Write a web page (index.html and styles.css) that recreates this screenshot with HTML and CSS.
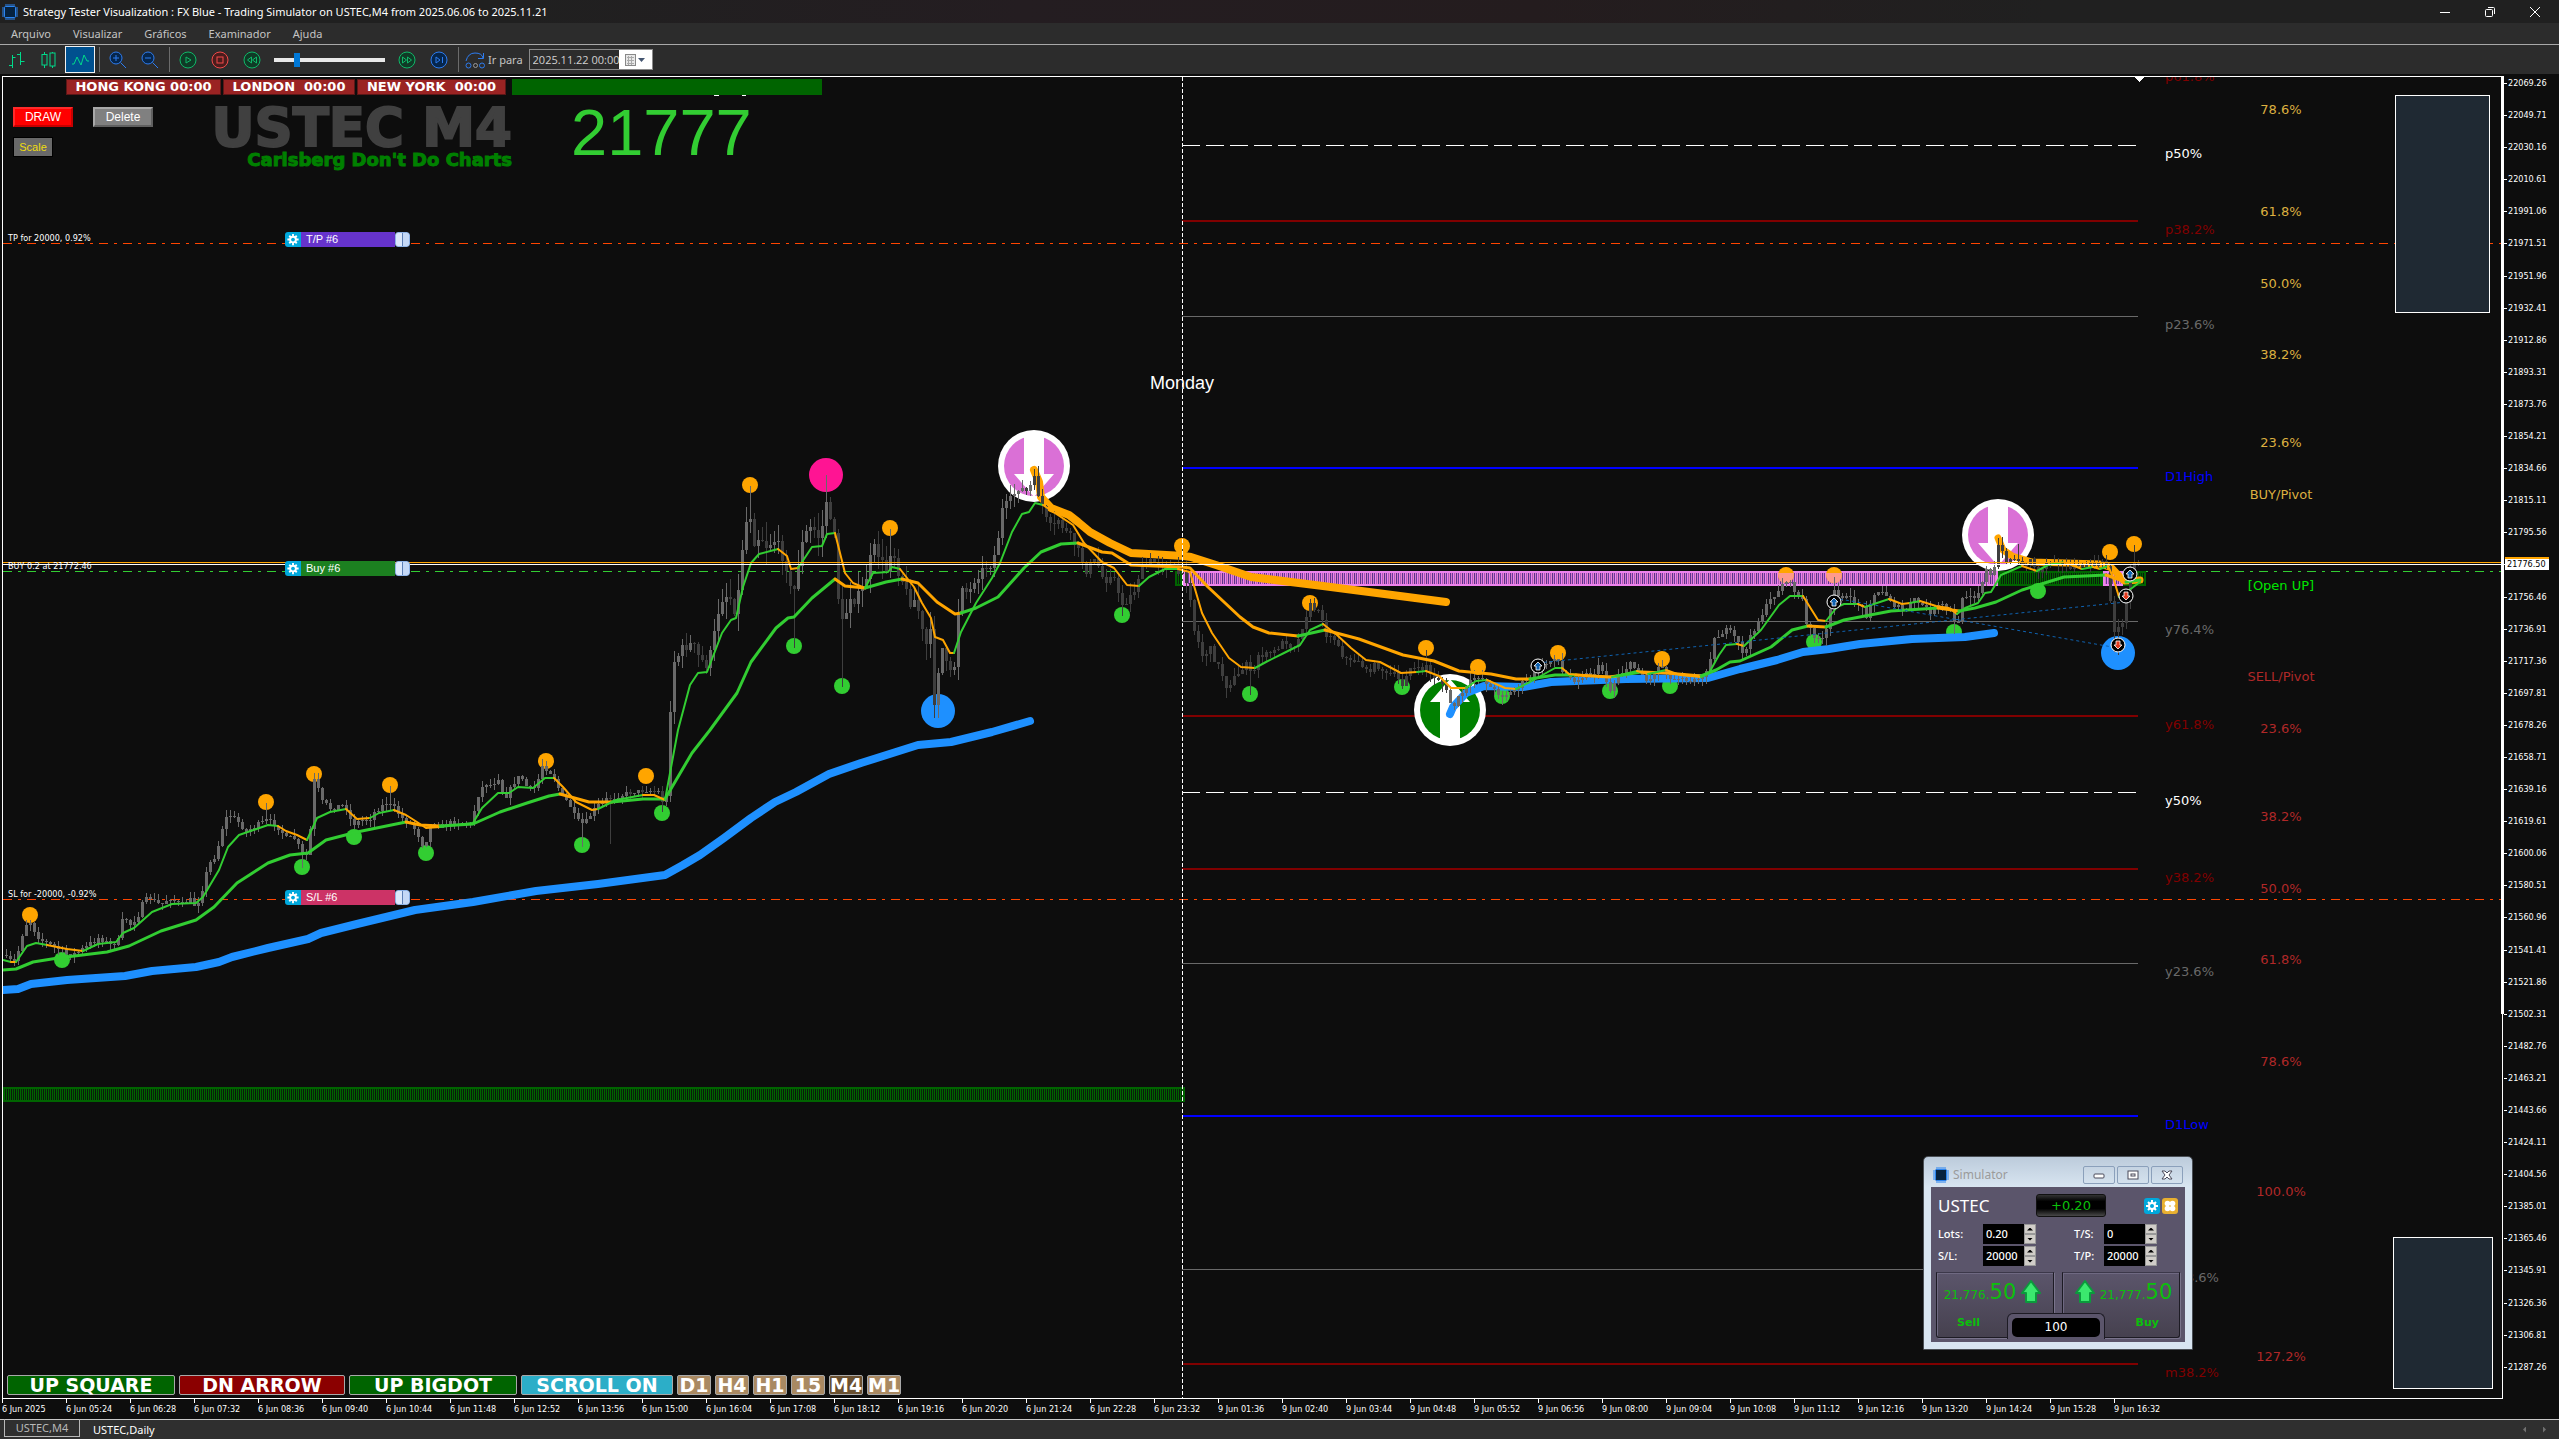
FILE: index.html
```
<!DOCTYPE html>
<html lang="pt">
<head>
<meta charset="utf-8">
<title>Strategy Tester Visualization</title>
<link rel="stylesheet" href="styles.css">
</head>
<body>
<svg class="defs" width="0" height="0" aria-hidden="true">
  <defs>
    <symbol id="chip" viewBox="0 0 16 16">
      <path d="M4 0v16M6 0v16M8 0v16M10 0v16M12 0v16M0 4h16M0 6h16M0 8h16M0 10h16M0 12h16" stroke="#2a84f0" stroke-width="1" fill="none"/>
      <rect x="2.500" y="2.500" width="11" height="11" rx="1" fill="#06223f" stroke="#2a84f0"/>
    </symbol>
    <symbol id="gear" viewBox="0 0 16 16">
      <path d="M8 2v12M2 8h12M4 4l8 8M12 4l-8 8" stroke="#fff" stroke-width="2"/>
      <circle cx="8" cy="8" r="4" fill="#fff"/><circle cx="8" cy="8" r="2" fill="#00a8dc"/>
    </symbol>
    <symbol id="rise" viewBox="0 0 20 24">
      <path d="M10 1L19 13H15V22H5V13H1Z" fill="#3be86e" stroke="#0b9a3c" stroke-width="2" stroke-linejoin="round"/>
    </symbol>
  </defs>
</svg>
<div class="app">
  <header class="titlebar">
    <svg class="app-icon" viewBox="0 0 16 16"><use href="#chip"/></svg>
    <h1 class="app-title">Strategy Tester Visualization : FX Blue - Trading Simulator on USTEC,M4 from 2025.06.06 to 2025.11.21</h1>
    <div class="caption">
      <button class="caption-btn" aria-label="Minimize"><svg viewBox="0 0 12 12"><path d="M1 6.500h10"/></svg></button>
      <button class="caption-btn" aria-label="Restore"><svg viewBox="0 0 12 12"><rect x="1.500" y="3.500" width="7" height="7" rx="1"/><path d="M4 1.500h5.500q1 0 1 1V8"/></svg></button>
      <button class="caption-btn" aria-label="Close"><svg viewBox="0 0 12 12"><path d="M1 1l10 10M11 1L1 11"/></svg></button>
    </div>
  </header>

  <nav class="menubar">
    <button class="menu">Arquivo</button>
    <button class="menu">Visualizar</button>
    <button class="menu">Gráficos</button>
    <button class="menu">Examinador</button>
    <button class="menu">Ajuda</button>
  </nav>

  <div class="toolbar">
    <button class="tool green" aria-label="Bars"><svg viewBox="0 0 20 20"><path d="M6.500 5v13M3 15.500h3.500M6.500 7.500h3M14.500 2v13M11 4.500h3.500M14.500 11.500h4"/></svg></button>
    <button class="tool green" aria-label="Candles"><svg viewBox="0 0 20 20"><path d="M6.500 2v2M6.500 15v3M14.500 2v1M14.500 16v2"/><rect x="4" y="4.500" width="5" height="10.500"/><rect x="12" y="3" width="5" height="13"/></svg></button>
    <button class="tool green active" aria-label="Line"><svg viewBox="0 0 20 20"><path d="M2 14h2l3-7 4 8 3-10 3 6h2"/></svg></button>
    <span class="sep"></span>
    <button class="tool blue" aria-label="Zoom in"><svg viewBox="0 0 20 20"><circle cx="8" cy="8" r="6" class="shade"/><path d="M5 8h6M8 5v6M12.500 12.500L18 18"/></svg></button>
    <button class="tool blue" aria-label="Zoom out"><svg viewBox="0 0 20 20"><circle cx="8" cy="8" r="6" class="shade"/><path d="M5 8h6M12.500 12.500L18 18"/></svg></button>
    <span class="sep"></span>
    <button class="tool play" aria-label="Play"><svg viewBox="0 0 20 20"><circle cx="10" cy="10" r="8" class="shade"/><path d="M8 7l5 3-5 3z"/></svg></button>
    <button class="tool stop" aria-label="Stop"><svg viewBox="0 0 20 20"><circle cx="10" cy="10" r="8" class="shade"/><rect x="7" y="7" width="6" height="6"/></svg></button>
    <button class="tool play" aria-label="Slower"><svg viewBox="0 0 20 20"><circle cx="10" cy="10" r="8" class="shade"/><path d="M9.500 7v6l-4-3zM14.500 7v6l-4-3z"/></svg></button>
    <input class="speed" type="range" min="0" max="32" value="6" aria-label="Speed">
    <button class="tool play" aria-label="Faster"><svg viewBox="0 0 20 20"><circle cx="10" cy="10" r="8" class="shade"/><path d="M5.500 7v6l4-3zM10.500 7v6l4-3z"/></svg></button>
    <button class="tool blue" aria-label="To end"><svg viewBox="0 0 20 20"><circle cx="10" cy="10" r="8" class="shade"/><path d="M7 7v6l4-3zM13.500 7v6"/></svg></button>
    <span class="sep"></span>
    <button class="goto"><svg viewBox="0 0 20 20"><path d="M1 11Q3 3 10 3t8 5M18.500 3v5.500H13"/><circle cx="3.500" cy="15.500" r="2.500"/><circle cx="10.500" cy="15.500" r="2" stroke="#999"/><circle cx="17" cy="15.500" r="2.500"/></svg>Ir para</button>
    <div class="datebox">
      <input class="date" type="text" value="2025.11.22 00:00" aria-label="Date">
      <button class="date-drop" aria-label="Calendar"><svg viewBox="0 0 24 16"><rect x="2.500" y="2.500" width="10" height="11" fill="#e8e8e8" stroke="#888"/><path d="M4 5.500h7M4 8.500h7M4 11.500h7M5.500 4v9M8.500 4v9" stroke="#aaa"/><path d="M15 6h7l-3.500 4z" fill="#445570"/></svg></button>
    </div>
  </div>

  <main class="chart">
    <section class="plot">
      <svg class="canvas" id="canvas" role="img" aria-label="USTEC M4"></svg>
      <div class="edge"></div>

      <div class="sessions">
        <span class="session">HONG KONG 00:00</span>
        <span class="session london">LONDON&nbsp; 00:00</span>
        <span class="session york">NEW YORK&nbsp; 00:00</span>
        <span class="status"></span>
      </div>
      <div class="draw-tools">
        <button class="btn draw">DRAW</button>
        <button class="btn delete">Delete</button>
        <button class="btn scale">Scale</button>
      </div>
      <div class="watermark">
        <div class="symbol">USTEC M4</div>
        <div class="motto">Carlsberg Don't Do Charts</div>
      </div>
      <div class="big-price">21777</div>

      <div class="order order-tp"><svg viewBox="0 0 16 16"><use href="#gear"/></svg><span>T/P #6</span><button aria-label="Drag T/P"></button></div>
      <div class="order order-buy"><svg viewBox="0 0 16 16"><use href="#gear"/></svg><span>Buy #6</span><button aria-label="Drag Buy"></button></div>
      <div class="order order-sl"><svg viewBox="0 0 16 16"><use href="#gear"/></svg><span>S/L #6</span><button aria-label="Drag S/L"></button></div>

      <div class="frames">
        <button class="signal up">UP SQUARE</button>
        <button class="signal down">DN ARROW</button>
        <button class="signal up">UP BIGDOT</button>
        <button class="signal scroll">SCROLL ON</button>
        <button class="frame">D1</button>
        <button class="frame">H4</button>
        <button class="frame">H1</button>
        <button class="frame">15</button>
        <button class="frame current">M4</button>
        <button class="frame">M1</button>
      </div>

      <section class="sim">
        <header class="sim-head">
          <svg class="sim-icon" viewBox="0 0 16 16"><use href="#chip"/></svg>
          <h2 class="sim-title">Simulator</h2>
          <button class="sim-btn" aria-label="Minimize"><svg viewBox="0 0 12 12"><rect x="1" y="5" width="10" height="4" rx="1"/></svg></button>
          <button class="sim-btn" aria-label="Maximize"><svg viewBox="0 0 12 12"><rect x="1" y="2" width="10" height="8"/><rect x="4" y="5" width="4" height="2"/></svg></button>
          <button class="sim-btn" aria-label="Close"><svg viewBox="0 0 12 12"><path d="M1 2h3l2 2 2-2h3L8 6l3 4H8L6 8l-2 2H1l3-4z"/></svg></button>
        </header>
        <div class="sim-body">
          <div class="sim-top">
            <span class="sim-symbol">USTEC</span>
            <output class="sim-pos">+0.20</output>
            <button class="sq cyan" aria-label="Settings"><svg viewBox="0 0 16 16"><use href="#gear"/></svg></button>
            <button class="sq gold" aria-label="Layout"><svg viewBox="0 0 16 16"><circle cx="5.500" cy="5.500" r="2.800"/><circle cx="10.500" cy="5.500" r="2.800"/><circle cx="5.500" cy="10.500" r="2.800"/><circle cx="10.500" cy="10.500" r="2.800"/></svg></button>
          </div>
          <div class="fields">
            <label for="lots">Lots:</label><div class="spin"><input id="lots" value="0.20"><span class="steps"><button aria-label="Lots up"></button><button class="dn" aria-label="Lots down"></button></span></div>
            <label for="ts" class="second">T/S:</label><div class="spin"><input id="ts" value="0"><span class="steps"><button aria-label="T/S up"></button><button class="dn" aria-label="T/S down"></button></span></div>
            <label for="sl">S/L:</label><div class="spin"><input id="sl" value="20000"><span class="steps"><button aria-label="S/L up"></button><button class="dn" aria-label="S/L down"></button></span></div>
            <label for="tp" class="second">T/P:</label><div class="spin"><input id="tp" value="20000"><span class="steps"><button aria-label="T/P up"></button><button class="dn" aria-label="T/P down"></button></span></div>
          </div>
          <div class="deal">
            <button class="side sell"><span class="quote">21,776.<b>50</b><svg viewBox="0 0 20 24"><use href="#rise"/></svg></span><span class="verb">Sell</span></button>
            <button class="side buy"><span class="quote"><svg viewBox="0 0 20 24"><use href="#rise"/></svg>21,777.<b>50</b></span><span class="verb">Buy</span></button>
            <div class="spread"><output>100</output></div>
          </div>
        </div>
      </section>
    </section>
    <aside class="price-axis">
      <ul class="prices" id="prices"></ul>
      <div class="price-now">21776.50</div>
    </aside>
    <ul class="time-axis" id="times"></ul>
  </main>

  <footer class="tabs">
    <button class="tab selected">USTEC,M4</button>
    <button class="tab">USTEC,Daily</button>
    <span class="tab-nav"><button aria-label="Previous"></button><button class="next" aria-label="Next"></button></span>
  </footer>
</div>
<script src="chart.js"></script>
</body>
</html>
```
FILE: styles.css
```
* { box-sizing: border-box; }
html, body { height: 100%; margin: 0; }
body { background: #0d0d0d; color: #fff; font-family: "Noto Sans", "Open Sans", sans-serif; font-size: 11px; overflow: hidden; }
button, input { font: inherit; color: inherit; margin: 0; padding: 0; border: 0; background: none; }
ul { list-style: none; margin: 0; padding: 0; }
.defs { position: absolute; }
.app { display: flex; flex-direction: column; height: 100vh; }

.titlebar { display: flex; align-items: center; height: 23px; background: linear-gradient(90deg, #202020 20%, #241d21 40%, #241c1e 60%, #202020 80%); }
.app-icon { width: 16px; height: 16px; margin: 0 5px 0 2px; }
.app-title { flex: 1; margin: 0; font-size: 11px; font-weight: 400; line-height: 22px; }
.caption { display: flex; padding-right: 2px; }
.caption-btn { display: flex; align-items: center; justify-content: center; width: 45px; height: 22px; }
.caption-btn svg { width: 12px; height: 12px; fill: none; stroke: #fff; }

.menubar { display: flex; gap: 22px; height: 22px; padding-left: 11px; background: #2c2c2c; border-bottom: 1px solid #a9a9a9; color: #c4c4c4; }
.menu { line-height: 20px; }

.toolbar { display: flex; align-items: center; height: 29px; background: #2c2c2c; margin-bottom: 2px; }
.tool { display: flex; align-items: center; justify-content: center; width: 32px; height: 28px; }
.tool svg, .goto svg { width: 20px; height: 20px; fill: none; stroke: currentColor; }
.tool.active { width: 30px; margin: 0 1px; height: 27px; background: #00508f; border: 1px solid #f0f0f0; }
.green { color: #00d98a; }
.blue { color: #2d7cf0; }
.blue .shade { fill: #06264c; }
.play { color: #10b768; }
.play .shade { fill: #0f3a26; }
.stop { color: #f24a4a; }
.stop .shade { fill: #4a1c1c; }
.sep { width: 1px; height: 25px; margin: 0 2px 0 3px; background: #6b6b6b; }
.speed { appearance: none; width: 111px; height: 20px; margin: 0 6px; }
.speed::-webkit-slider-runnable-track { height: 4px; background: #e8e8e8; }
.speed::-webkit-slider-thumb { appearance: none; width: 6px; height: 14px; margin-top: -5px; background: #0078d7; }
.goto { display: flex; align-items: center; gap: 3px; margin-left: 4px; color: #c4c4c4; }
.goto svg { color: #2d7cf0; }
.datebox { display: flex; width: 124px; height: 21px; margin-left: 6px; border: 1px solid #8a8a8a; }
.date { flex: 1; min-width: 0; padding-left: 3px; color: #d0d0d0; font-family: "Open Sans", sans-serif; }
.date-drop { width: 33px; background: #fff; }
.date-drop svg { display: block; width: 24px; height: 16px; margin: 0 auto; }

.chart { flex: 1; min-height: 0; display: grid; grid-template-columns: 1fr 56px; grid-template-rows: 1fr 20px; margin-left: 2px; }
.plot { position: relative; border: 1px solid #fff; min-height: 0; }
.canvas { position: absolute; inset: 0; width: 100%; height: 100%; overflow: hidden; }
.canvas text { white-space: pre; }
.edge { position: absolute; top: -1px; right: -2px; width: 3px; height: 71%; background: #fff; }
.level-label, .fib-label { font-family: "DejaVu Sans", sans-serif; font-size: 13px; }
.fib-label { text-anchor: middle; }
.note { font-family: "DejaVu Sans Condensed", "DejaVu Sans", sans-serif; font-size: 9px; fill: #fff; }
.day { font-family: "Liberation Sans", sans-serif; font-size: 18px; fill: #fff; text-anchor: middle; }

.sessions { position: absolute; left: 63px; top: 2px; display: flex; gap: 2px; height: 16px; }
.session { width: 155px; background: #9a2323; border: 1px solid #5c1717; font: 700 13px/14px "DejaVu Sans", sans-serif; text-align: center; white-space: nowrap; }
.london { width: 132px; }
.york { width: 149px; }
.status { width: 310px; margin-left: 4px; background: #006400; }
.draw-tools { position: absolute; left: 10px; top: 30px; display: grid; grid-template-columns: 60px 60px; gap: 10px 20px; font-family: "Liberation Sans", sans-serif; font-size: 12px; }
.btn { height: 20px; border: 2px solid; }
.draw { background: #f00; border-color: #ff2a2a #c80000 #c80000 #ff2a2a; }
.delete { background: #808080; border-color: #a8a8a8 #606060 #606060 #a8a8a8; }
.scale { width: 40px; background: #696969; border: 1px solid #000; color: #f0dc10; font-size: 11px; }
.watermark { position: absolute; left: 160px; top: 27px; width: 349px; text-align: right; font-family: "DejaVu Sans", sans-serif; font-weight: 700; white-space: nowrap; }
.symbol { font-size: 53px; line-height: 48px; color: #404040; -webkit-text-stroke: 2px #404040; }
.motto { font-size: 18px; line-height: 16px; color: #008000; -webkit-text-stroke: 1px #008000; }
.big-price { position: absolute; left: 568px; top: 24px; font: 65px/64px "Liberation Sans", sans-serif; color: #32cd32; }

.order { position: absolute; left: 282px; display: flex; width: 125px; height: 15px; font: 11px/15px "Liberation Sans", sans-serif; border-radius: 3px; overflow: hidden; }
.order svg { width: 16px; height: 15px; background: #00a8dc; }
.order span { flex: 1; padding-left: 5px; }
.order button { width: 15px; border: 1px solid #8fb4e8; background: linear-gradient(90deg, #dbe8fb 45%, #5c7fb5 45%, #5c7fb5 55%, #c4d8f6 55%); border-radius: 3px; }
.order-tp { top: 155px; } .order-tp span { background: #6633cc; }
.order-buy { top: 484px; } .order-buy span { background: #1c8020; }
.order-sl { top: 813px; } .order-sl span { background: #cc3366; }

.frames { position: absolute; left: 4px; bottom: 3px; display: flex; gap: 4px; font: 700 19px/18px "DejaVu Sans", sans-serif; }
.frames button { height: 20px; border: 1px solid #a8a8a8; border-radius: 2px; }
.frames .signal { width: 168px; }
.frames .down { width: 166px; background: #8b0000; }
.frames .scroll { width: 152px; background: #2caec8; }
.up { background: #006400; }
.frame { width: 34px; background: #a98962; }
.current { background: #6a5030; }

.sim { position: absolute; left: 1920px; top: 1079px; width: 270px; padding: 0 7px 7px; background: linear-gradient(#bccbdb, #d8e5f1 30px); border: 1px solid #4a4f55; border-radius: 5px 5px 0 0; }
.sim-head { display: flex; align-items: center; gap: 2px; height: 30px; padding: 5px 2px 0; }
.sim-icon { width: 16px; height: 16px; }
.sim-title { flex: 1; margin: 0 0 0 2px; font-size: 12px; font-weight: 400; color: #9b9b9b; }
.sim-btn { display: flex; align-items: center; justify-content: center; width: 32px; height: 18px; border: 1px solid #8ba0bb; border-radius: 2px; }
.sim-btn svg { width: 12px; height: 12px; fill: #fff; stroke: #4a4a5a; }
.sim-body { background: #5b556b; padding: 7px 5px 4px; }
.sim-top { display: flex; align-items: center; gap: 2px; height: 23px; padding: 0 2px; }
.sim-symbol { width: 96px; font-size: 17px; line-height: 22px; }
.sim-pos { width: 70px; height: 23px; margin-right: auto; background: linear-gradient(#333, #000 30%, #000 65%, #484848); border: 1px solid #111; border-radius: 3px; color: #0bc00b; font: 13px/21px "DejaVu Sans", sans-serif; text-align: center; }
.sq { width: 16px; height: 16px; border-radius: 3px; }
.sq svg { display: block; width: 16px; height: 16px; fill: #fff; }
.cyan { background: #00a8dc; }
.gold { background: #e8b030; }
.fields { display: grid; grid-template-columns: 45px 76px 45px 53px; row-gap: 2px; margin-top: 7px; padding-left: 2px; font-size: 11px; font-weight: 500; line-height: 20px; }
.second { padding-left: 15px; }
.spin { display: flex; width: 53px; height: 20px; }
.spin input { width: 41px; padding-left: 3px; background: #000; }
.steps { display: flex; flex-direction: column; width: 12px; }
.steps button { flex: 1; border: 1px solid #999; background: #d0cdc8; }
.steps button::after { content: ""; display: block; width: 6px; height: 3px; margin: 0 auto; background: #000; clip-path: polygon(50% 0, 100% 100%, 0 100%); }
.steps .dn::after { clip-path: polygon(0 0, 100% 0, 50% 100%); }
.deal { position: relative; display: grid; grid-template-columns: 1fr 1fr; gap: 8px; margin-top: 6px; }
.side { height: 66px; border: 1px solid #1d1b24; border-top-color: #3c384a; background: linear-gradient(#5b556b, #46414f); box-shadow: 1px 1px 0 #7a748c, inset 1px 1px 0 #6f6982; color: #0bc00b; border-radius: 0 0 3px 3px; font-family: "DejaVu Sans", sans-serif; }
.quote { display: flex; align-items: baseline; justify-content: center; height: 36px; font-size: 12px; line-height: 36px; }
.quote b { font-size: 21px; font-weight: 400; }
.quote svg { align-self: center; width: 20px; height: 24px; margin: 0 5px; }
.verb { display: block; padding: 0 20px; font-size: 11px; font-weight: 700; line-height: 26px; text-align: left; }
.buy .verb { text-align: right; }
.spread { position: absolute; left: 50%; bottom: -1px; width: 98px; height: 26px; margin-left: -51px; padding: 4px 4px 2px; background: #5b556b; border: 1px solid #1d1b24; border-bottom: 0; border-radius: 6px 6px 0 0; }
.spread output { display: block; height: 19px; background: #000; border-radius: 5px; font: 12px/19px "DejaVu Sans", sans-serif; text-align: center; }

.price-axis { position: relative; padding: 1px 0 25px 1px; font: 9px/13px "DejaVu Sans Condensed", "DejaVu Sans", sans-serif; }
.prices { display: flex; flex-direction: column; justify-content: space-between; height: 100%; }
.prices li { display: flex; align-items: center; gap: 1px; height: 13px; }
.prices li::before { content: ""; width: 3px; height: 1px; background: #fff; }
.price-now { position: absolute; left: 2px; top: 481px; width: 44px; height: 13px; padding-left: 2px; line-height: 11px; background: #fff; border-top: 2px solid #ffa500; color: #000; }
.time-axis { grid-column: 1 / -1; display: flex; font: 9px/20px "DejaVu Sans Condensed", "DejaVu Sans", sans-serif; white-space: nowrap; overflow: hidden; }
.time-axis li { flex: 0 0 64px; background: linear-gradient(#fff, #fff) 0 0 / 1px 4px no-repeat; }

.tabs { display: flex; height: 20px; background: #2f2f2f; border-top: 1px solid #c8c8c8; padding-left: 4px; }
.tab { padding: 0 13px; line-height: 18px; }
.tab.selected { width: 76px; height: 18px; padding: 0; margin-top: -1px; border: 1px solid #b8b8b8; border-top: 0; color: #b8b8b8; }
.tab-nav { display: flex; gap: 17px; align-items: center; margin-left: auto; padding-right: 13px; }
.tab-nav button { width: 3px; height: 6px; background: #707070; clip-path: polygon(100% 0, 100% 100%, 0 50%); }
.tab-nav .next { clip-path: polygon(0 0, 100% 50%, 0 100%); }
```
FILE: chart.js
```
const NS = "http://www.w3.org/2000/svg";
const canvas = document.getElementById("canvas");

const GREEN = "#32cd32", ORANGE = "#ffa500", BLUE = "#1e90ff", RED = "#800000", GREY = "#696969";

function add(parent, name, attrs, text) {
  const node = document.createElementNS(NS, name);
  for (const key in attrs) node.setAttribute(key, attrs[key]);
  if (text !== undefined) node.textContent = text;
  parent.appendChild(node);
  return node;
}

/* window coordinates: the plot's inner corner is at 3,77 */
const defs = add(canvas, "defs", {});
function stripes(id, base, tones) {
  const p = add(defs, "pattern", { id, width: tones.length, height: 20, patternUnits: "userSpaceOnUse" });
  add(p, "rect", { width: tones.length, height: 20, fill: base });
  tones.forEach((t, i) => t && add(p, "rect", { x: i, width: 1, height: 20, fill: t }));
}
stripes("greenBars", "#006400", [null, "#08270a", null, "#0a1a0a"]);
stripes("violetBars", "#ee82ee", ["#6a3a9a", "#ee82ee", "#b05ab8", "#e884d0", "#5a3090", "#d878c8"]);

const root = add(canvas, "g", { transform: "translate(-3 -77)" });
const crisp = add(root, "g", { "shape-rendering": "crispEdges" });

function hline(y, x1, x2, color, width, dash) {
  add(crisp, "line", { x1, x2, y1: y, y2: y, stroke: color, "stroke-width": width, ...(dash ? { "stroke-dasharray": dash } : {}) });
}

/* daily levels */
const levels = [
  ["p61.8%", 68, RED, 2], ["p50%", 145, "#ffffff", 1, "18 6"], ["p38.2%", 221, RED, 2], ["p23.6%", 316, GREY, 1],
  ["D1High", 468, "#0000ff", 2], ["y76.4%", 621, GREY, 1], ["y61.8%", 716, RED, 2], ["y50%", 792, "#ffffff", 1, "18 6"],
  ["y38.2%", 869, RED, 2], ["y23.6%", 963, GREY, 1], ["D1Low", 1116, "#0000ff", 2], ["m23.6%", 1269, GREY, 1], ["m38.2%", 1364, RED, 2]
];
for (const [label, y, color, width, dash] of levels) {
  hline(width === 1 ? y + 0.5 : y, 1182, 2138, color, width, dash);
  add(root, "text", { x: 2165, y: y + 13, fill: color, class: "level-label" }, label);
}

/* pivot column */
const pivots = [
  ["78.6%", 114, 0], ["61.8%", 216, 0], ["50.0%", 288, 0], ["38.2%", 359, 0], ["23.6%", 447, 0], ["BUY/Pivot", 499, 0],
  ["[Open UP]", 590, 1], ["SELL/Pivot", 681, 2], ["23.6%", 733, 2], ["38.2%", 821, 2], ["50.0%", 893, 2],
  ["61.8%", 964, 2], ["78.6%", 1066, 2], ["100.0%", 1196, 2], ["127.2%", 1361, 2]
];
for (const [label, y, kind] of pivots)
  add(root, "text", { x: 2281, y, fill: ["#dcb040", "#00e600", "#b02828"][kind], class: "fib-label" }, label);

/* order lines and current price */
hline(243.5, 3, 2502, "#ff4500", 1, "9 6 3 6");
hline(899.5, 3, 2502, "#ff4500", 1, "9 6 3 6");
hline(571.5, 3, 2502, GREEN, 1, "9 6 3 6");

function band(parent, x1, x2, y, stroke, fill) {
  add(parent, "rect", { x: x1 + 1, y: y + 1, width: x2 - x1 - 2, height: 13, fill: `url(#${fill})`, stroke, "stroke-width": 2 });
}
band(crisp, 2, 1185, 1087, "#006400", "greenBars");
band(crisp, 1175, 1183, 571, "#006400", "greenBars");
band(crisp, 1183, 1998, 571, "#ee82ee", "violetBars");
band(crisp, 1998, 2103, 571, "#006400", "greenBars");
band(crisp, 2103, 2123, 571, "#ee82ee", "violetBars");
band(crisp, 2123, 2146, 571, "#006400", "greenBars");

/* swing markers */
const dot = (x, y, r, fill) => add(root, "circle", { cx: x, cy: y, r, fill });
[[30,915],[266,802],[314,774],[390,785],[546,761],[646,776],[750,485],[890,528],[1182,546],[1310,603],[1426,648],[1478,667],
 [1558,653],[1662,659],[1786,575],[1834,575],[2110,552],[2134,544]].forEach(([x, y]) => dot(x, y, 8, ORANGE));
[[62,960],[302,867],[354,837],[426,853],[582,845],[662,813],[794,646],[842,686],[1122,615],[1250,694],[1402,687],[1502,696],
 [1610,691],[1670,686],[1814,642],[1954,632],[2038,591]].forEach(([x, y]) => dot(x, y, 8, GREEN));
dot(826, 475, 17, "#ff1493");
dot(938, 711, 17, BLUE);
dot(2118, 653, 17, BLUE);
/* the band tints the two markers that it crosses */
for (const x of [1786, 1834])
  add(root, "path", { d: `M${x - 8} 573Q${x - 8} 583 ${x} 583T${x + 8} 573Z`, fill: "#ff9a8c" });

function bigArrow(x, y, fill, up) {
  const g = add(root, "g", { transform: `translate(${x} ${y})${up ? " rotate(180)" : ""}` });
  add(g, "circle", { r: 36, fill: "#fff" });
  add(g, "circle", { r: 30, fill });
  add(g, "path", { d: "M-10 -32H10V8H20L0 31L-20 8H-10Z", fill: "#fff" });
}
bigArrow(1034, 466, "#da70d6");
bigArrow(1998, 535, "#da70d6");
bigArrow(1450, 710, "#008000", true);

function line(points, color, width) {
  add(root, "polyline", { points: points.join(" "), fill: "none", stroke: color, "stroke-width": width, "stroke-linejoin": "round", "stroke-linecap": "round" });
}

/* long average */
line([3,990,18,989,31,984,67,980,125,976,152,971,196,967,219,962,232,957,268,948,308,939,321,933,357,924,415,910,473,902,536,891,598,884,
  665,875,683,865,700,855,724,838,751,818,775,802,796,792,829,774,861,763,918,745,951,742,992,732,1030,721], BLUE, 8);
line([1450,714,1453,707,1466,693,1484,686,1523,687,1551,682,1626,679,1708,678,1740,669,1777,660,1803,652,1829,649,1860,644,1912,639,
  1965,637,1994,633], BLUE, 8);
line([1034,470,1039,482,1041,497,1051,508,1069,515,1078,522,1090,532,1110,543,1131,553,1184,556,1191,557,1216,565,1251,577,1323,586,1446,602], ORANGE, 8);
line([1998,538,2003,550,2012,556,2032,562,2100,564,2112,568,2124,581,2140,580], ORANGE, 7);

/* price path: x, y of the close */
const path = [3,955,8,960,16,962,20,940,24,928,28,920,32,925,36,935,44,942,62,950,68,956,80,951,98,938,110,945,119,940,123,915,130,925,134,920,
  140,912,143,900,150,898,160,905,170,898,180,905,190,900,196,908,203,885,208,865,216,855,220,835,224,820,230,815,238,822,246,832,256,825,
  266,820,276,825,286,838,294,838,300,850,304,860,308,850,311,820,314,780,318,790,322,802,330,808,345,805,352,825,360,820,370,818,376,810,
  386,803,394,808,402,818,412,825,418,835,424,848,430,825,440,826,450,823,460,822,470,825,478,795,484,783,492,785,498,778,504,800,512,785,
  520,775,528,790,536,788,541,765,548,770,556,780,560,795,568,802,576,820,584,825,590,815,598,805,604,800,612,798,620,795,632,792,645,790,
  658,792,664,805,668,790,671,665,680,652,686,645,692,645,700,660,708,665,714,635,720,598,726,595,732,600,736,615,740,570,744,525,750,515,
  754,540,760,535,766,545,774,540,782,555,788,570,792,610,796,570,800,555,804,535,812,527,820,540,826,500,830,525,836,530,839,630,844,620,
  850,595,856,600,862,590,868,570,872,550,876,548,882,565,888,572,891,540,896,565,902,580,908,600,914,600,920,615,924,650,930,635,934,700,
  939,660,943,645,948,680,954,665,958,610,962,585,968,595,974,580,982,570,990,565,996,550,1002,510,1010,500,1018,487,1026,492,1034,480,
  1040,500,1046,520,1052,530,1058,520,1064,530,1072,540,1080,555,1086,570,1096,560,1104,582,1112,570,1120,605,1128,600,1134,590,1140,570,
  1148,562,1160,563,1170,565,1180,575,1188,580,1194,630,1202,655,1210,650,1220,670,1226,685,1232,680,1240,675,1246,660,1252,680,1258,655,
  1266,655,1276,650,1284,640,1292,648,1298,640,1304,620,1310,605,1316,610,1322,618,1326,635,1336,640,1342,655,1350,662,1358,660,1366,672,
  1376,664,1386,675,1394,675,1402,685,1408,668,1420,670,1426,665,1430,675,1440,680,1446,692,1452,708,1460,695,1468,685,1476,675,1484,680,
  1492,690,1502,695,1512,692,1522,683,1530,678,1538,670,1548,662,1556,655,1562,672,1572,680,1584,675,1594,672,1600,665,1604,675,1610,690,
  1618,675,1630,665,1640,672,1648,683,1656,668,1664,665,1670,680,1680,676,1690,680,1700,680,1708,665,1714,640,1722,632,1728,630,1736,640,
  1744,655,1752,632,1760,617,1770,600,1778,590,1786,580,1794,590,1802,600,1806,625,1814,635,1822,640,1828,625,1833,590,1840,595,1850,600,
  1860,605,1866,615,1872,595,1884,592,1894,605,1904,612,1914,600,1922,605,1930,612,1940,605,1950,610,1956,630,1962,600,1968,592,1976,598,
  1982,580,1986,570,1992,580,1998,545,2006,560,2014,558,2020,565,2030,560,2038,572,2048,560,2060,563,2072,568,2086,565,2100,563,2106,565,
  2110,600,2114,630,2122,625,2126,600,2130,570,2136,560];
let seed = 7;
const rnd = () => (seed = (seed * 16807) % 2147483647) / 2147483647;
function priceAt(x) {
  let i = 0;
  while (i < path.length - 4 && path[i + 2] < x) i += 2;
  const t = Math.min(1, (x - path[i]) / (path[i + 2] - path[i]));
  return path[i + 1] + (path[i + 3] - path[i + 1]) * Math.max(0, t);
}
/* wicks that reach a marker */
const spikes = { 750: 486, 826: 475, 890: 529, 794: 648, 842: 687, 938: 712, 1034: 469, 1182: 548, 1122: 616, 1250: 695, 582: 847, 610: 844,
  302: 868, 390: 786, 266: 803, 1310: 604, 1426: 650, 1998: 538, 2134: 545, 2118: 655, 2114: 652, 662: 812, 2018: 544, 1954: 634, 1834: 577 };
const candles = add(root, "g", { "shape-rendering": "crispEdges" });
let openY = 955;
for (let x = 6; x <= 2138; x += 4) {
  const vol = x < 670 ? 7 : x < 960 ? 19 : x < 1240 ? 12 : 8;
  const closeY = Math.round(priceAt(x) + (rnd() - 0.5) * vol * 0.7);
  let high = Math.round(Math.min(openY, closeY) - rnd() * vol), low = Math.round(Math.max(openY, closeY) + rnd() * vol);
  if (spikes[x]) { high = Math.min(high, spikes[x]); low = Math.max(low, spikes[x]); }
  const falling = closeY > openY;
  const dark = (x >= 1034 && x < 1450) || x >= 1998 || (x > 592 && x < 1034 && falling);
  const fill = dark ? "#3e3e3e" : GREY;
  add(candles, "rect", { x, y: high, width: 1, height: low - high, fill });
  add(candles, "rect", { x: x - 1, y: Math.min(openY, closeY), width: 3, height: Math.max(1, Math.abs(closeY - openY)), fill });
  openY = closeY;
}

/* averages: runs alternate between rising (G) and falling (O) */
function average(runs, width) {
  let last = [];
  for (const [kind, pts] of runs) {
    line([...last, ...pts], kind === "G" ? GREEN : ORANGE, width);
    last = pts.slice(-2);
  }
}
average([
  ["G", [3,970,16,969,33,962,58,958,107,952,129,946,161,931,196,920,214,907,237,883,268,863,290,855,308,853,326,840,357,832,406,822]],
  ["O", [420,825,440,826]], ["G", [473,824,500,812,527,803,549,796,560,794]], ["O", [589,802,612,802]],
  ["G", [643,799,665,799,692,753,710,730,737,693,751,662,776,628,788,618,794,617,812,598,835,579]], ["O", [845,586,865,588]],
  ["G", [886,582,902,579]], ["O", [918,583,937,602,955,614,961,613]], ["G", [976,608,998,597,1024,568,1041,552,1061,544,1078,543]],
  ["O", [1102,552,1112,553,1131,565,1155,566,1182,567,1190,568,1208,587,1240,617,1253,627,1269,633,1298,636]], ["G", [1325,630]],
  ["O", [1359,639,1403,655,1434,661,1459,671,1491,674,1516,679,1530,679]], ["G", [1555,675,1576,675]], ["O", [1609,677,1617,676]],
  ["G", [1641,672]], ["O", [1667,673,1701,676]], ["G", [1716,670,1730,662,1740,661,1771,647,1792,630,1808,626]], ["O", [1826,627]],
  ["G", [1844,620,1891,611,1938,608]], ["O", [1959,611]], ["G", [1975,608,1996,602,2022,590,2064,577,2106,575]], ["O", [2126,582]], ["G", [2140,580]]
], 3);
average([
  ["G", [3,960,11,962]], ["O", [16,962]], ["G", [27,946,36,943,47,945]], ["O", [67,949,83,951]],
  ["G", [98,944,116,942,123,933,134,928,152,912,172,904,196,903,203,897,219,870,228,847,239,835,268,825,278,826]],
  ["O", [286,831,297,835,307,840]], ["G", [317,818,330,812,346,809]], ["O", [357,819,370,818]], ["G", [379,813,394,810]],
  ["O", [406,815,417,822,426,828,440,827]], ["G", [473,823,482,808,498,793,509,793,518,787,533,788,545,778,554,778]],
  ["O", [563,787,576,802,592,810,598,809]], ["G", [616,800,643,795]], ["O", [654,795,665,800]],
  ["G", [678,730,690,685,698,673,707,672,722,633,731,620,736,618,743,587,751,563,759,554,778,549]], ["O", [787,556,791,569,798,568]],
  ["G", [812,547,822,546,827,534,835,533]], ["O", [841,557,845,573,853,583,865,588]], ["G", [873,573,888,572,892,567,900,569]],
  ["O", [914,587,922,603,931,618,935,637,943,640,950,653,954,653]],
  ["G", [961,632,976,603,992,578,1000,563,1012,532,1022,514,1029,512,1035,503,1043,505]],
  ["O", [1073,525,1084,543,1102,562,1114,568,1127,585,1139,586]], ["G", [1149,577,1165,569,1178,569]],
  ["O", [1190,572,1202,613,1212,633,1229,658,1241,667,1255,668]], ["G", [1266,662,1284,653,1300,645,1310,630,1323,624]],
  ["O", [1337,635,1351,648,1366,660,1380,662,1401,673,1417,672]], ["G", [1426,671]], ["O", [1439,676,1451,688,1466,688]],
  ["G", [1476,681,1487,680]], ["O", [1505,688,1516,689]], ["G", [1530,682,1555,668,1562,668]], ["O", [1569,674,1594,676,1612,677]],
  ["G", [1637,671]], ["O", [1648,674]], ["G", [1666,670]], ["O", [1680,675,1701,677]], ["G", [1709,673,1719,655,1726,645,1737,644]],
  ["O", [1744,646]], ["G", [1761,630,1779,605,1790,596,1803,596]], ["O", [1818,620,1826,621]], ["G", [1837,607,1844,604,1858,604]],
  ["O", [1865,607]], ["G", [1889,599]], ["O", [1902,604,1910,603]], ["G", [1920,601]], ["O", [1936,606,1949,608,1957,614]],
  ["G", [1965,608,1978,603,1985,593,1991,592,2001,575,2022,566]], ["O", [2037,571]], ["G", [2048,565,2064,562]], ["O", [2082,569]],
  ["G", [2093,567]], ["O", [2100,569]], ["G", [2108,566]], ["O", [2113,577,2119,597]], ["G", [2132,588,2140,582]]
], 2);

/* current price, day separator */
const front = add(root, "g", { "shape-rendering": "crispEdges" });
add(front, "rect", { x: 3, y: 562, width: 2500, height: 1, fill: ORANGE });
add(front, "rect", { x: 3, y: 564, width: 2500, height: 1, fill: "#fff" });
add(front, "line", { x1: 1182.5, x2: 1182.5, y1: 77, y2: 1398, stroke: "#fff", "stroke-dasharray": "4 2" });
add(front, "path", { d: "M2134 77H2144L2139 82Z", fill: "#fff" });
add(front, "path", { d: "M714 95.500h5M742 95.500h4", stroke: "#fff" });

/* trades */
for (const [x1, y1, x2, y2] of [[1538, 663, 2126, 602], [1834, 598, 2118, 648]])
  add(root, "line", { x1, y1, x2, y2, stroke: "#0f62b0", "stroke-dasharray": "3 3" });
for (const [x, y, buy] of [[1538, 666, 1], [1834, 602, 1], [2130, 574, 1], [2126, 596, 0], [2118, 645, 0]]) {
  const g = add(root, "g", { transform: `translate(${x} ${y})` });
  add(g, "circle", { r: 7, fill: "#000", stroke: "#fff" });
  add(g, "path", { d: "M0 -4L4 0H2V4H-2V0H-4Z", fill: buy ? "#0f62b0" : "#e03a1e", stroke: "#fff", "stroke-width": 0.8, transform: buy ? "" : "rotate(180)" });
}

/* side panels */
add(crisp, "rect", { x: 2395.5, y: 95.5, width: 94, height: 217, fill: "#1f2933", stroke: "#fff" });
add(crisp, "rect", { x: 2393.5, y: 1237.5, width: 99, height: 151, fill: "#1f2933", stroke: "#fff" });

add(root, "text", { x: 8, y: 241, class: "note" }, "TP for 20000, 0.92%");
add(root, "text", { x: 8, y: 569, class: "note" }, "BUY 0.2 at 21772.46");
add(root, "text", { x: 8, y: 897, class: "note" }, "SL for -20000, -0.92%");
add(root, "text", { x: 1182, y: 389, class: "day" }, "Monday");

/* axes */
const prices = document.getElementById("prices");
for (let i = 0; i <= 40; i++) {
  const li = document.createElement("li");
  li.textContent = (22069.26 - 19.55 * i).toFixed(2);
  prices.appendChild(li);
}
function stamp(day, minutes) {
  return `${day} ${String(Math.floor(minutes / 60)).padStart(2, "0")}:${String(minutes % 60).padStart(2, "0")}`;
}
const labels = ["6 Jun 2025"];
for (let i = 0; i < 18; i++) labels.push(stamp("6 Jun", 324 + 64 * i));
for (let i = 0; i < 15; i++) labels.push(stamp("9 Jun", 96 + 64 * i));
const times = document.getElementById("times");
for (const label of labels) {
  const li = document.createElement("li");
  li.textContent = label;
  times.appendChild(li);
}
```
